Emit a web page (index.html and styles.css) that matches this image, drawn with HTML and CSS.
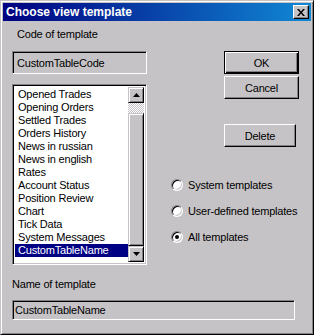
FILE: index.html
```html
<!DOCTYPE html>
<html lang="en">
<head>
  <meta charset="UTF-8">
  <title>Choose view template</title>
  <link rel="stylesheet" href="styles.css">
</head>
<body>
  <div class="window">
    <div class="title-bar">
      <span class="title">Choose view template</span>
      <div class="close-btn">
        <svg width="8" height="7" viewBox="0 0 8 7">
          <path d="M0 0h2l2 2.5l2-2.5h2l-3 3.5l3 3.5h-2l-2-2.5l-2 2.5h-2l3-3.5z" fill="#000"/>
        </svg>
      </div>
    </div>

    <div class="content">
      <div class="columns">
        <div class="left-col">
          <div class="label indent">Code of template</div>
          <div class="field code-field">CustomTableCode</div>

          <div class="listbox">
            <ul class="items">
              <li>Opened Trades</li>
              <li>Opening Orders</li>
              <li>Settled Trades</li>
              <li>Orders History</li>
              <li>News in russian</li>
              <li>News in english</li>
              <li>Rates</li>
              <li>Account Status</li>
              <li>Position Review</li>
              <li>Chart</li>
              <li>Tick Data</li>
              <li>System Messages</li>
              <li class="selected">CustomTableName</li>
            </ul>
            <div class="scrollbar">
              <div class="scroll-btn">
                <svg width="7" height="4" viewBox="0 0 7 4"><path d="M3.5 0L7 4H0z" fill="#000"/></svg>
              </div>
              <div class="track"></div>
              <div class="thumb"></div>
              <div class="scroll-btn">
                <svg width="7" height="4" viewBox="0 0 7 4"><path d="M0 0H7L3.5 4z" fill="#000"/></svg>
              </div>
            </div>
          </div>
        </div>

        <div class="right-col">
          <div class="buttons">
            <div class="btn default">OK</div>
            <div class="btn">Cancel</div>
            <div class="btn delete">Delete</div>
          </div>
          <div class="radios">
            <div class="radio-row"><span class="radio"></span>System templates</div>
            <div class="radio-row"><span class="radio"></span>User-defined templates</div>
            <div class="radio-row"><span class="radio checked"></span>All templates</div>
          </div>
        </div>
      </div>

      <div class="label name-label">Name of template</div>
      <div class="field name-field">CustomTableName</div>
    </div>
  </div>
</body>
</html>
```

FILE: styles.css
```css
* {
  box-sizing: border-box;
  margin: 0;
  padding: 0;
}
body {
  font-family: 'Liberation Sans', Arial, sans-serif;
  font-size: 11px;
  letter-spacing: -0.2px;
  color: #000;
  background: #c6c3c6;
}
.window {
  width: 314px;
  height: 335px;
  background: #c6c3c6;
  border: 1px solid;
  border-color: #c6c3c6 #000 #000 #c6c3c6;
  box-shadow: inset 1px 1px #fff, inset -1px -1px #848284;
  padding: 2px;
}
.title-bar {
  height: 18px;
  display: flex;
  align-items: center;
  justify-content: space-between;
  padding: 0 2px 0 3px;
  background: linear-gradient(to right, #000080, #1088d4);
}
.title {
  color: #fff;
  font-weight: bold;
  font-size: 12px;
  letter-spacing: 0;
}
.close-btn {
  width: 16px;
  height: 14px;
  display: flex;
  align-items: center;
  justify-content: center;
  background: #c6c3c6;
  border: 1px solid;
  border-color: #fff #000 #000 #fff;
  box-shadow: inset -1px -1px #848284;
}
.content {
  padding: 7px 0 0 9px;
}
.columns {
  display: flex;
}
.left-col {
  width: 135px;
}
.label {
  height: 13px;
  line-height: 13px;
}
.indent {
  margin-left: 5px;
}
.field {
  border: 1px solid;
  border-color: #848284 #fff #fff #848284;
  box-shadow: inset 1px 1px #000, inset -1px -1px #c6c3c6;
  padding: 0 4px;
  display: flex;
  align-items: center;
}
.code-field {
  margin-top: 10px;
  height: 23px;
}
.listbox {
  margin-top: 10px;
  height: 181px;
  display: flex;
  background: #fff;
  border: 1px solid;
  border-color: #848284 #fff #fff #848284;
  box-shadow: inset 1px 1px #000, inset -1px -1px #c6c3c6;
  padding: 2px;
}
.items {
  list-style: none;
  flex: 1;
  padding-top: 1px;
}
.items li {
  height: 13px;
  line-height: 13px;
  padding-left: 3px;
}
.items .selected {
  background: #000084;
  color: #fff;
}
.scrollbar {
  width: 16px;
  display: flex;
  flex-direction: column;
}
.scroll-btn,
.thumb {
  background: #c6c3c6;
  border: 1px solid;
  border-color: #c6c3c6 #000 #000 #c6c3c6;
  box-shadow: inset 1px 1px #fff, inset -1px -1px #848284;
}
.scroll-btn {
  height: 16px;
  display: flex;
  align-items: center;
  justify-content: center;
}
.track {
  height: 10px;
  background: repeating-conic-gradient(#fff 0 25%, #c6c3c6 0 50%) 0 0 / 2px 2px;
}
.thumb {
  flex: 1;
}
.right-col {
  margin-left: 24px;
  padding-top: 23px;
}
.buttons {
  margin-left: 53px;
  display: flex;
  flex-direction: column;
  gap: 2px;
}
.btn {
  width: 75px;
  height: 23px;
  display: flex;
  align-items: center;
  justify-content: center;
  background: #c6c3c6;
  border: 1px solid;
  border-color: #fff #000 #000 #fff;
  box-shadow: inset -1px -1px #848284;
}
.btn.default {
  border-color: #000;
  box-shadow: inset 1px 1px #fff, inset -1px -1px #000, inset -2px -2px #848284;
}
.btn.delete {
  width: 72px;
  margin-top: 23px;
}
.radios {
  margin-top: 32px;
  display: flex;
  flex-direction: column;
  gap: 14px;
}
.radio-row {
  height: 12px;
  line-height: 12px;
  display: flex;
  align-items: center;
  gap: 5px;
}
.radio {
  width: 12px;
  height: 12px;
  border-radius: 50%;
  background: #fff;
  border: 1px solid;
  border-color: #848284 #fff #fff #848284;
  box-shadow: inset 1px 1px #000, inset -1px -1px #c6c3c6;
  display: flex;
  align-items: center;
  justify-content: center;
}
.radio.checked::after {
  content: "";
  width: 4px;
  height: 4px;
  border-radius: 50%;
  background: #000;
}
.name-label {
  margin-top: 13px;
}
.name-field {
  margin-top: 9px;
  width: 283px;
  height: 20px;
  padding: 0 2px;
}
```
